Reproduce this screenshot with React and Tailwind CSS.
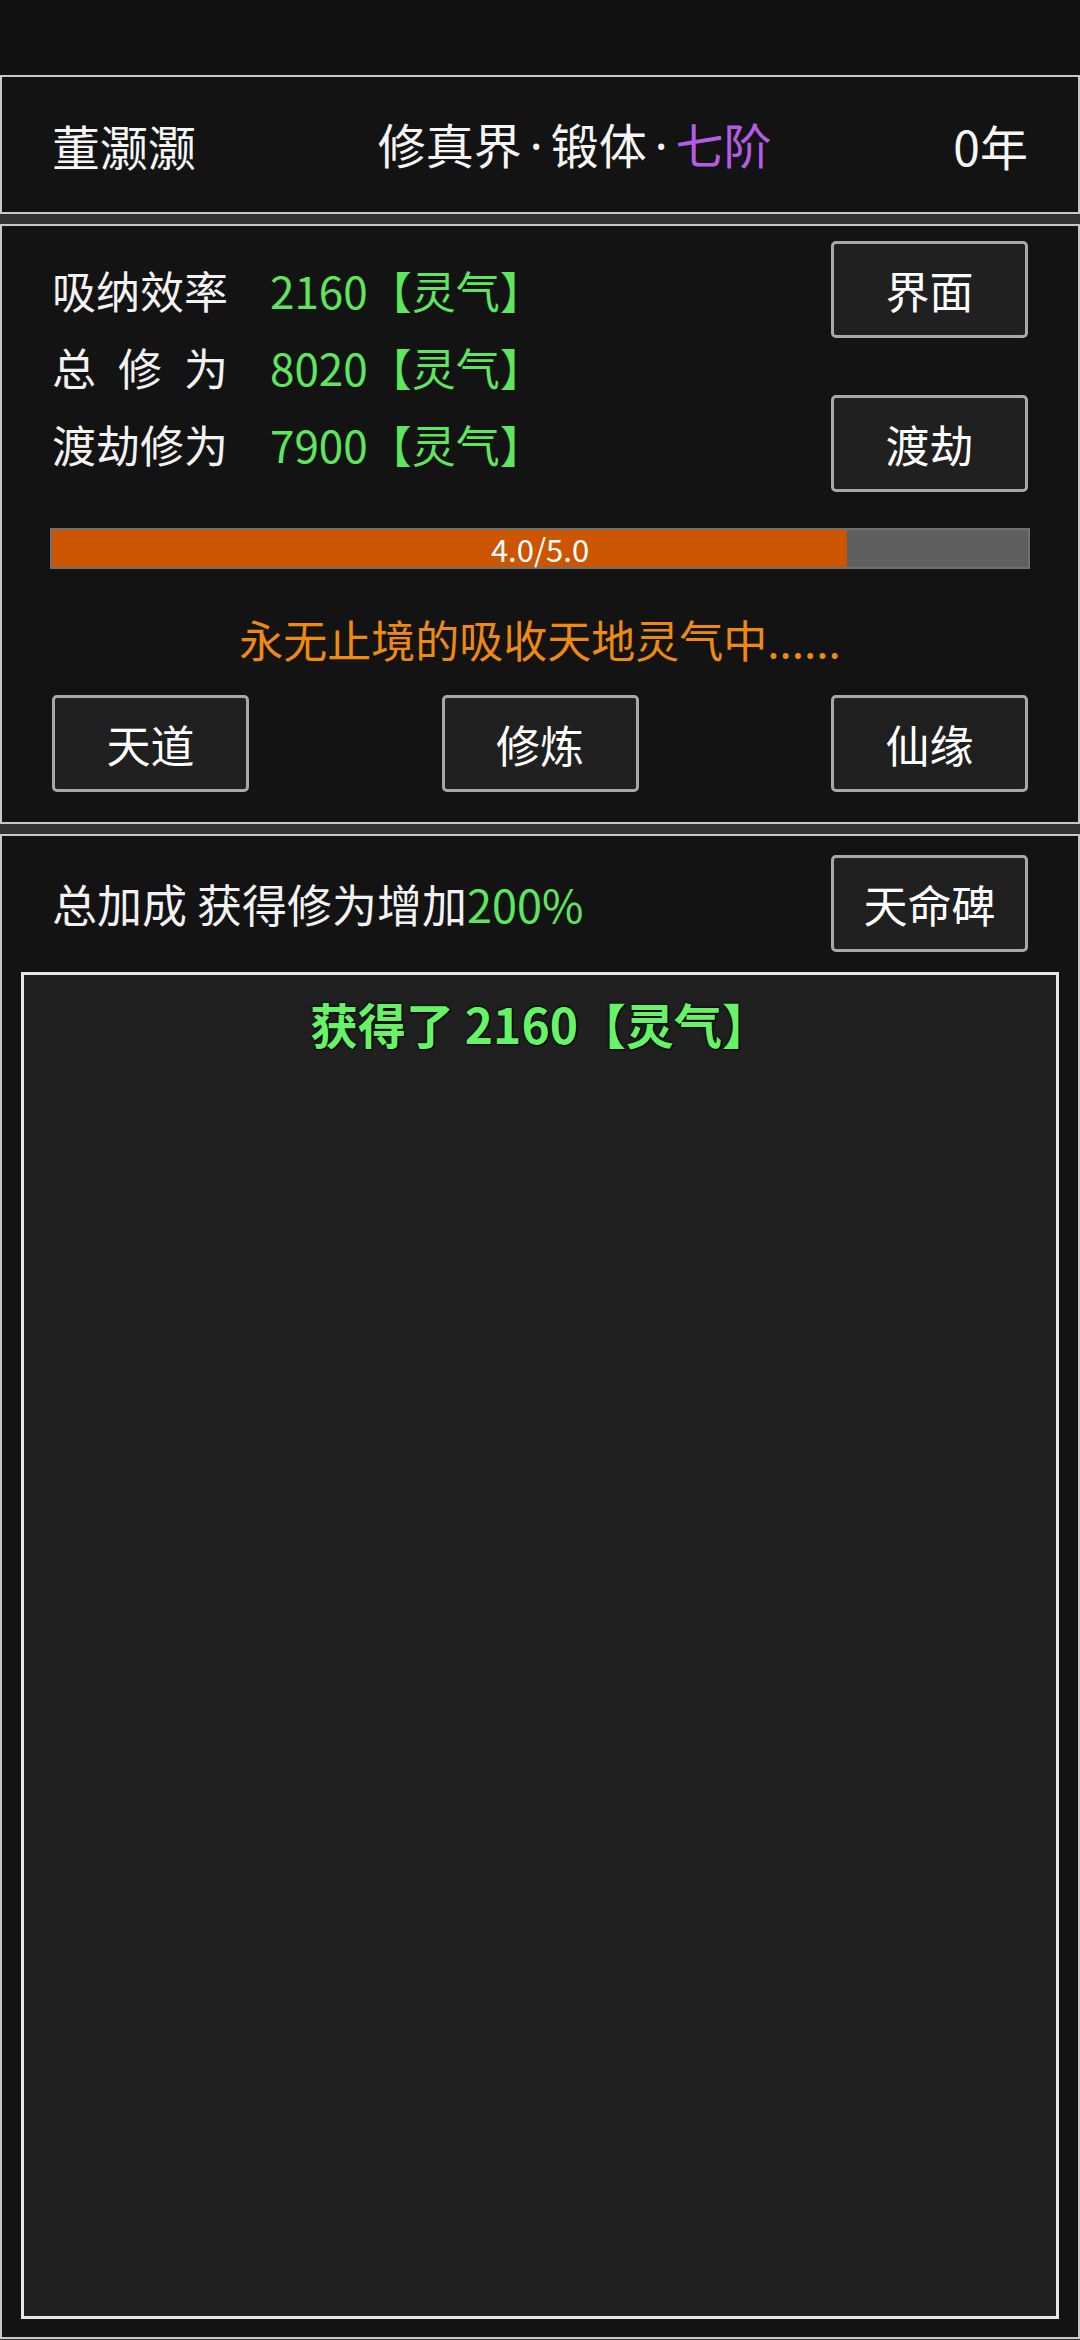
import React from "react";

const font = { fontFamily: '"Noto Sans CJK SC", "Noto Sans", sans-serif' };

function Btn({ children }) {
  return (
    <button
      type="button"
      className="w-[197px] h-[97px] shrink-0 flex items-center justify-center bg-[#202020] border-[3px] border-[#a8a8a8] rounded-[5px] text-white text-[44px] leading-none"
    >
      {children}
    </button>
  );
}

function StatRow({ label, value }) {
  return (
    <div className="h-[77px] flex items-center text-[44px] leading-none">
      <div className="w-[176px] flex justify-between text-[#f2f2f2]">
        {label.split("").map((c, i) => (
          <span key={i}>{c}</span>
        ))}
      </div>
      <span className="ml-[42px] text-[#5ee65e]">{value}【灵气】</span>
    </div>
  );
}

// narrow middle dot, not the full-width CJK one
const Dot = () => <span className="font-['Noto_Sans'] px-[8px]">·</span>;

export default function App() {
  return (
    <div className="w-[1080px] h-[2340px] flex flex-col bg-[#121212]" style={font}>
      {/* status bar space */}
      <div className="h-[75px] shrink-0 bg-[#121212]" />

      <div className="flex-1 flex flex-col gap-[10px] bg-[#333333] pb-[1px]">
        {/* header */}
        <div className="h-[139px] shrink-0 flex items-center justify-between px-[50px] bg-[#131313] border-2 border-[#c8c8c8] text-[48px] leading-none text-[#f5f5f5]">
          <span>董灏灏</span>
          <span>
            修真界<Dot />锻体<Dot />
            <span className="text-[#b45ce6]">七阶</span>
          </span>
          <span>0年</span>
        </div>

        {/* cultivation panel */}
        <div className="h-[600px] shrink-0 flex flex-col px-[50px] pt-[15px] bg-[#131313] border-2 border-[#c8c8c8]">
          <div className="h-[251px] flex justify-between">
            <div className="flex flex-col justify-center">
              <StatRow label="吸纳效率" value="2160" />
              <StatRow label="总修为" value="8020" />
              <StatRow label="渡劫修为" value="7900" />
            </div>
            <div className="flex flex-col justify-between">
              <Btn>界面</Btn>
              <Btn>渡劫</Btn>
            </div>
          </div>

          <div className="relative mt-[36px] mx-[-2px] h-[41px] bg-[#5f5f5f] border-2 border-[#707070]">
            <div className="h-full w-[81.5%] bg-[#cc5500]" />
            <div className="absolute inset-0 flex items-center justify-center text-white text-[31px] leading-none">
              4.0/5.0
            </div>
          </div>

          <div className="mt-[40px] h-[60px] flex items-center justify-center text-[44px] leading-none text-[#ee8a10]">
            永无止境的吸收天地灵气中......
          </div>

          <div className="mt-[26px] flex justify-between">
            <Btn>天道</Btn>
            <Btn>修炼</Btn>
            <Btn>仙缘</Btn>
          </div>
        </div>

        {/* log panel */}
        <div className="flex-1 flex flex-col bg-[#131313] border-2 border-[#c8c8c8]">
          <div className="flex items-center justify-between px-[50px] pt-[19px]">
            <span className="text-[45px] leading-none text-[#f2f2f2]">
              总加成 获得修为增加<span className="text-[#5ee65e]">200%</span>
            </span>
            <Btn>天命碑</Btn>
          </div>
          <div className="flex-1 mx-[19px] mt-[20px] mb-[18px] bg-[#202020] border-[3px] border-[#e6e6e6] flex flex-col items-center">
            <div className="mt-[18px] text-[48px] font-bold leading-[60px] text-[#66f466] [text-shadow:0_0_3px_#000,0_0_2px_#000,1px_1px_0_#000]">
              获得了 2160【灵气】
            </div>
          </div>
        </div>
      </div>
    </div>
  );
}
